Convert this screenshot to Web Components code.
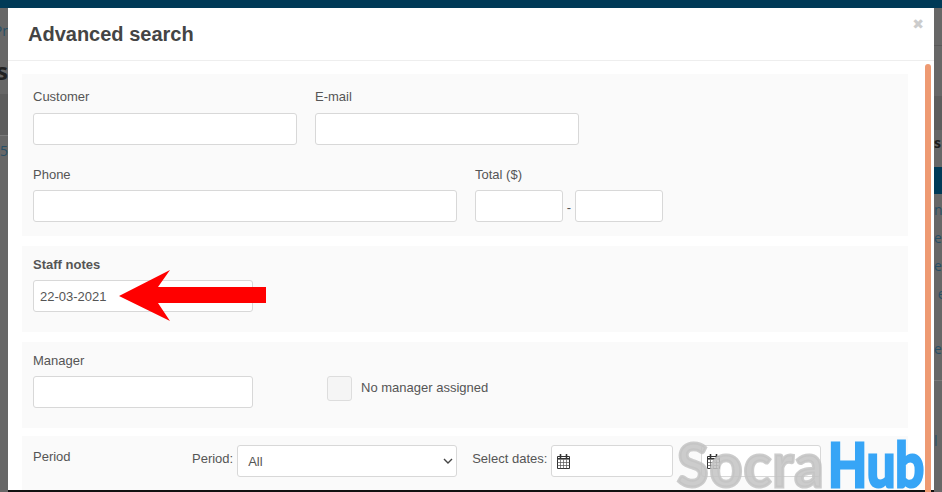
<!DOCTYPE html>
<html>
<head>
<meta charset="utf-8">
<title>Advanced search</title>
<style>
html,body{margin:0;padding:0;height:100%;overflow:hidden;}
body{font-family:"Liberation Sans",Arial,sans-serif;}
</style>
</head>
<body>
<page-backdrop></page-backdrop>
<search-modal heading="Advanced search">
  <form-panel height="162" pad="15">
    <div style="display:flex;gap:18px">
      <form-field label="Customer" width="264"></form-field>
      <form-field label="E-mail" width="264"></form-field>
    </div>
    <div style="display:flex;gap:18px;margin-top:22px;--label-gap:8px">
      <form-field label="Phone" width="424"></form-field>
      <range-field label="Total ($)"></range-field>
    </div>
  </form-panel>
  <form-panel height="86" pad="11" style="--label-gap:8px">
    <form-field label="Staff notes" width="220" value="22-03-2021" strong></form-field>
  </form-panel>
  <form-panel height="86" pad="11" style="--label-gap:8px">
    <div style="display:flex;gap:74px">
      <form-field label="Manager" width="220"></form-field>
      <check-field label="No manager assigned"></check-field>
    </div>
  </form-panel>
  <period-panel></period-panel>
</search-modal>
<red-arrow></red-arrow>
<brand-mark></brand-mark>

<script>
const fieldCss = `
  input{box-sizing:border-box;height:32px;margin:0;padding:0 6px;border:1px solid #d8d8d8;border-radius:3px;background:#fff;
    font:13px "Liberation Sans",Arial,sans-serif;color:#555;outline:none;display:block;}
  label{display:block;font-size:13px;line-height:15px;color:#555;}
`
const calendar = `<svg width="13" height="15" viewBox="0 0 13 15" fill="none" stroke="#333">
  <path d="M.5 2.5h12v12H.5z" fill="#fff" stroke-width="1"/>
  <path d="M.5 5.5h12M.5 8.5h12M.5 11.5h12M3.5 5.5v9M6.5 5.5v9M9.5 5.5v9" stroke="#555" stroke-width=".7"/>
  <path d="M.5 4.5h12" stroke-width="1"/>
  <path d="M3.5 .5v3M9.5 .5v3" stroke-width="1.6" stroke-linecap="round"/>
</svg>`

class PageBackdrop extends HTMLElement{
  connectedCallback(){
    this.attachShadow({mode:'open'}).innerHTML = `
    <style>
      :host{position:fixed;inset:0;display:block;background:#676767;font-family:"Open Sans","Liberation Sans",sans-serif;overflow:hidden;}
      .top{height:8px;background:#003a57;}
      .sides{display:flex;justify-content:space-between;height:484px;}
      .col{width:8px;overflow:hidden;color:#274f66;font-size:14px;white-space:nowrap;}
      .left{direction:rtl;}
      .band{background:#5d5d5d;}
      .line{border-bottom:1px solid #7a7a7a;}
      .dark{border-bottom:1px solid #5a5a5a;}
      .big{font:bold 24px/26px "Open Sans",sans-serif;color:#222;}
      .s{font:bold 14px/26px "Open Sans",sans-serif;color:#1c1c1c;}
      .nav{background:#003a57;}
      .t{line-height:28px;height:28px;}
    </style>
    <div class="top"></div>
    <div class="sides">
      <div class="col left">
        <div style="height:14px"></div>
        <div style="line-height:18px">Pr</div>
        <div style="height:18px"></div>
        <div class="big">rs</div>
        <div style="height:10px"></div>
        <div class="band line" style="height:41px"></div>
        <div style="height:6px"></div>
        <div style="line-height:18px">5</div>
      </div>
      <div class="col right">
        <div class="dark" style="height:37px"></div>
        <div style="height:50px"></div>
        <div class="band" style="height:34px"></div>
        <div class="s">s</div>
        <div style="height:11px"></div>
        <div class="nav" style="height:27px"></div>
        <div style="height:2px"></div>
        <div class="t">ne</div>
        <div class="t">ed</div>
        <div class="t">ed</div>
        <div class="t">&nbsp;e</div>
        <div style="height:27px"></div>
        <div class="t">ed</div>
        <div class="line" style="height:17px"></div>
        <div style="height:46px"></div>
        <div class="t">l</div>
      </div>
    </div>`
  }
}
customElements.define('page-backdrop',PageBackdrop)

class SearchModal extends HTMLElement{
  connectedCallback(){
    this.attachShadow({mode:'open'}).innerHTML = `
    <style>
      :host{position:fixed;left:8px;top:8px;width:926px;height:484px;display:flex;flex-direction:column;background:#fff;overflow:hidden;}
      header{height:52px;flex:none;display:flex;align-items:center;padding:0 10px 0 20px;border-bottom:1px solid #eee;justify-content:space-between;}
      h1{margin:0;font:bold 20px "Liberation Sans",Arial,sans-serif;color:#444;}
      .x{font:bold 14px "Liberation Sans","DejaVu Sans",sans-serif;color:#ccc;align-self:flex-start;margin-top:7px;line-height:18px;}
      main{flex:1;min-height:0;padding:13px 26px 0 14px;display:flex;flex-direction:column;gap:10px;border-bottom:2px solid #111;overflow:hidden;}
      .bar{position:absolute;left:917px;top:56px;bottom:0;width:6px;background:#ee9a72;border-radius:3px 3px 0 0;}
    </style>
    <header><h1>${this.getAttribute('heading')}</h1><span class="x">&#10006;</span></header>
    <main><slot></slot></main>
    <div class="bar"></div>`
  }
}
customElements.define('search-modal',SearchModal)

class FormPanel extends HTMLElement{
  connectedCallback(){
    this.attachShadow({mode:'open'}).innerHTML = `
    <style>
      :host{display:block;box-sizing:border-box;height:${this.getAttribute('height')}px;padding:${this.getAttribute('pad')}px 11px 0;background:#fafafa;flex:none;}
    </style><slot></slot>`
  }
}
customElements.define('form-panel',FormPanel)

class FormField extends HTMLElement{
  connectedCallback(){
    const strong = this.hasAttribute('strong')
    const value = this.getAttribute('value') || ''
    this.attachShadow({mode:'open'}).innerHTML = `
    <style>
      :host{display:block;flex:none;width:${this.getAttribute('width')}px;}
      ${fieldCss}
      label{margin-bottom:var(--label-gap,9px);${strong?'font-weight:bold;':''}}
      input{width:100%;}
    </style>
    <label>${this.getAttribute('label')}</label>
    <input type="text" value="${value}">`
  }
}
customElements.define('form-field',FormField)

class RangeField extends HTMLElement{
  connectedCallback(){
    this.attachShadow({mode:'open'}).innerHTML = `
    <style>
      :host{display:block;flex:none;}
      ${fieldCss}
      label{margin-bottom:var(--label-gap,9px);}
      .r{display:flex;align-items:center;}
      input{width:88px;}
      span{width:12px;text-align:center;font-size:13px;color:#555;position:relative;top:1px;}
    </style>
    <label>${this.getAttribute('label')}</label>
    <div class="r"><input type="text"><span>-</span><input type="text"></div>`
  }
}
customElements.define('range-field',RangeField)

class CheckField extends HTMLElement{
  connectedCallback(){
    this.attachShadow({mode:'open'}).innerHTML = `
    <style>
      :host{display:flex;align-items:center;gap:9px;height:25px;margin-top:23px;flex:none;}
      i{display:block;box-sizing:border-box;width:25px;height:25px;border:1px solid #ddd;border-radius:3px;background:#f5f5f5;}
      span{font-size:13px;color:#555;position:relative;top:-1px;}
    </style>
    <i></i><span>${this.getAttribute('label')}</span>`
  }
}
customElements.define('check-field',CheckField)

class PeriodPanel extends HTMLElement{
  connectedCallback(){
    this.attachShadow({mode:'open'}).innerHTML = `
    <style>
      :host{display:flex;flex:none;height:60px;padding:9px 11px 0;box-sizing:border-box;background:#fafafa;font-size:13px;color:#555;margin-top:-2px;}
      ${fieldCss}
      .title{width:159px;flex:none;line-height:15px;padding-top:4px;}
      .lbl{line-height:28px;margin-right:4px;}
      .sel{position:relative;width:220px;flex:none;margin-right:15px;height:32px;}
      select{appearance:none;box-sizing:border-box;width:100%;height:32px;margin:0;border:1px solid #d8d8d8;border-radius:3px;background:#fff;
        padding:1px 10px 0;font:13px "Liberation Sans",Arial,sans-serif;color:#555;outline:none;}
      .sel svg{position:absolute;right:4px;top:13px;}
      .date{position:relative;flex:none;}
      .date svg{position:absolute;left:6px;top:9px;}
      .d1 input{width:122px;}
      .d2{margin-left:28px;}
      .d2 input{width:120px;}
    </style>
    <div class="title">Period</div>
    <span class="lbl">Period:</span>
    <div class="sel">
      <select><option>All</option></select>
      <svg width="10" height="7" viewBox="0 0 10 7" fill="none" stroke="#444" stroke-width="1.4"><path d="M1 1l4 4 4-4"/></svg>
    </div>
    <span class="lbl">Select dates:</span>
    <div class="date d1"><input type="text">${calendar}</div>
    <div class="date d2"><input type="text">${calendar}</div>`
  }
}
customElements.define('period-panel',PeriodPanel)

class RedArrow extends HTMLElement{
  connectedCallback(){
    this.attachShadow({mode:'open'}).innerHTML = `
    <style>:host{position:fixed;left:119px;top:270px;display:block;width:147px;height:51px;}svg{display:block;}</style>
    <svg width="147" height="51" viewBox="0 0 147 51"><path d="M0 26L51 0 39 17H147V33H39L51 51Z" fill="#f00"/></svg>`
  }
}
customElements.define('red-arrow',RedArrow)

class BrandMark extends HTMLElement{
  connectedCallback(){
    this.attachShadow({mode:'open'}).innerHTML = `
    <style>
      :host{position:fixed;left:676px;top:428px;display:block;width:250px;height:62px;white-space:nowrap;font:700 62px/70px Lato,sans-serif;-webkit-text-stroke:3px currentColor;paint-order:stroke;}
      span{position:absolute;top:0;transform-origin:0 50%;}
      .a{left:1px;color:rgba(195,195,195,.85);transform:scaleX(.93);letter-spacing:1px;}
      .b{left:152px;color:#37a5f6;transform:scaleX(.82);}
    </style>
    <span class="a">Socra</span><span class="b">Hub</span>`
  }
}
customElements.define('brand-mark',BrandMark)
</script>
</body>
</html>
